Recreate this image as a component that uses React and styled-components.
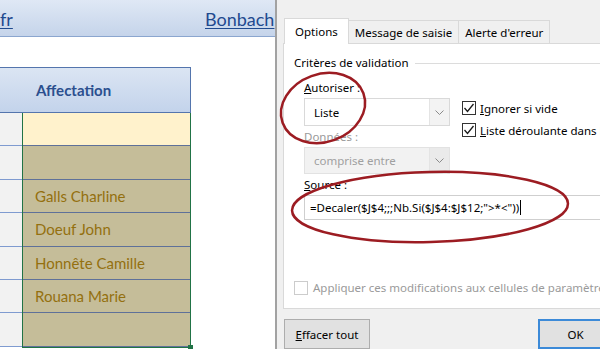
import styled, { createGlobalStyle } from "styled-components";

const GlobalStyle = createGlobalStyle`
  html, body {
    margin: 0;
    padding: 0;
    background: #ffffff;
    overflow: hidden;
  }
`;

const rows = [
  { id: 1, name: "", tone: "cream" },
  { id: 2, name: "", tone: "tan" },
  { id: 3, name: "Galls Charline", tone: "tan" },
  { id: 4, name: "Doeuf John", tone: "tan" },
  { id: 5, name: "Honnête Camille", tone: "tan" },
  { id: 6, name: "Rouana Marie", tone: "tan" },
  { id: 7, name: "", tone: "tan" },
];

const Chevron = () => (
  <svg width="9" height="5" viewBox="0 0 9 5">
    <polyline points="0.5,0.5 4.5,4.5 8.5,0.5" fill="none" stroke="#8a8a8a" strokeWidth="1" />
  </svg>
);

const Check = () => (
  <svg width="12" height="12" viewBox="0 0 12 12">
    <polyline points="1.5,6 4.5,9.5 10.5,2" fill="none" stroke="#1a1a1a" strokeWidth="1.3" />
  </svg>
);

const App = () => {
  return (
    <Page>
      <GlobalStyle />
      <Sheet>
        <LinkBar>
          <Link>fr</Link>
          <Link>Bonbach</Link>
        </LinkBar>
        <Gap />
        <Header>Affectation</Header>
        <Body>
          <RowHeads>
            {rows.map((el) => (
              <RowHead key={el.id} />
            ))}
          </RowHeads>
          <Selection>
            {rows.map((el) => (
              <Cell key={el.id} tone={el.tone}>
                {el.name}
              </Cell>
            ))}
            <Handle />
          </Selection>
        </Body>
      </Sheet>

      <Dialog>
        <Tabs>
          <Tab active>Options</Tab>
          <Tab>Message de saisie</Tab>
          <Tab>Alerte d'erreur</Tab>
        </Tabs>
        <Panel>
          <GroupTitle>
            <span>Critères de validation</span>
            <GroupLine />
          </GroupTitle>
          <Fields>
            <LeftCol>
              <Label>
                <u>A</u>utoriser :
              </Label>
              <Select>
                <SelectText>Liste</SelectText>
                <DropBtn>
                  <Chevron />
                </DropBtn>
              </Select>
              <Label disabled>Données :</Label>
              <Select disabled>
                <SelectText>comprise entre</SelectText>
                <DropBtn disabled>
                  <Chevron />
                </DropBtn>
              </Select>
            </LeftCol>
            <RightCol>
              <CheckRow>
                <Box>
                  <Check />
                </Box>
                <span>
                  <u>I</u>gnorer si vide
                </span>
              </CheckRow>
              <CheckRow>
                <Box>
                  <Check />
                </Box>
                <span>
                  <u>L</u>iste déroulante dans la
                </span>
              </CheckRow>
            </RightCol>
          </Fields>
          <SourceLabel>
            <u>S</u>ource :
          </SourceLabel>
          <SourceInput>
            =Decaler($J$4;;;Nb.Si($J$4:$J$12;"&gt;*&lt;"))
            <Caret />
          </SourceInput>
          <ApplyRow>
            <Box disabled />
            <span>Appliquer ces modifications aux cellules de paramètres i</span>
          </ApplyRow>
        </Panel>
        <Footer>
          <Button>
            <u>E</u>ffacer tout
          </Button>
          <Button primary>OK</Button>
        </Footer>
      </Dialog>

      <Marks width="600" height="349" viewBox="0 0 600 349">
        <ellipse cx="323" cy="108" rx="43" ry="34" transform="rotate(-20 323 108)" />
        <ellipse cx="430" cy="207" rx="138" ry="35" transform="rotate(-1.5 430 207)" />
      </Marks>
    </Page>
  );
};
export default App;

// page
const Page = styled.div`
  position: relative;
  display: flex;
  width: 600px;
  height: 349px;
  overflow: hidden;
  background: #ffffff;
`;

// feuille excel
const Sheet = styled.div`
  width: 275px;
  flex: none;
  display: flex;
  flex-direction: column;
  overflow: hidden;
  font-family: Lato, "Noto Sans", sans-serif;
`;

const LinkBar = styled.div`
  height: 36px;
  display: grid;
  grid-template-columns: 205px 1fr;
  align-items: center;
  background: linear-gradient(#dfe8f5, #c5d4ea);
  border-bottom: 1px solid #8ba6cf;
`;

const Link = styled.span`
  font-size: 18px;
  color: #1f4a8f;
  text-decoration: underline;
  text-underline-offset: 2px;
  white-space: nowrap;
  padding-top: 2px;
`;

const Gap = styled.div`
  height: 30px;
`;

const Header = styled.div`
  width: 191px;
  height: 46px;
  box-sizing: border-box;
  display: flex;
  align-items: center;
  padding-left: 36px;
  background: linear-gradient(#dbe5f3, #c3d3eb);
  border: 1px solid #5475ad;
  border-left: none;
  font-size: 15px;
  font-weight: bold;
  color: #2b4f8e;
`;

const Body = styled.div`
  display: flex;
  width: 191px;
`;

const RowHeads = styled.div`
  width: 22px;
  display: flex;
  flex-direction: column;
`;

const RowHead = styled.div`
  height: 33.4px;
  box-sizing: border-box;
  background: #f2f2f2;
  border-bottom: 1px solid #7f9bd0;
`;

const Selection = styled.div`
  position: relative;
  width: 169px;
  box-sizing: border-box;
  border: 1px solid #217346;
  border-top: none;
  display: flex;
  flex-direction: column;
`;

const Cell = styled.div`
  height: 33.4px;
  box-sizing: border-box;
  display: flex;
  align-items: center;
  padding-left: 12px;
  background: ${(p) => (p.tone === "cream" ? "#fff2cc" : "#c5bd99")};
  border-bottom: 1px solid #5f7199;
  font-size: 15px;
  color: #94700f;
`;

const Handle = styled.div`
  position: absolute;
  right: -3px;
  bottom: -3px;
  width: 5px;
  height: 5px;
  background: #217346;
`;

// boite de dialogue
const Dialog = styled.div`
  flex: 1;
  min-width: 0;
  display: flex;
  flex-direction: column;
  padding: 18px 0 0 6px;
  background: #f0f0f0;
  border-left: 2px solid #a2a2a2;
  font-family: "Noto Sans", sans-serif;
  font-size: 11.5px;
  color: #000000;
`;

const Tabs = styled.div`
  display: flex;
  align-items: flex-end;
  margin-left: 1px;
  margin-bottom: -1px;
  position: relative;
  z-index: 1;
`;

const Tab = styled.div`
  box-sizing: border-box;
  height: ${(p) => (p.active ? "26px" : "24px")};
  display: flex;
  align-items: center;
  padding: 0 ${(p) => (p.active ? "10px" : "6px")};
  background: ${(p) => (p.active ? "#ffffff" : "#f0f0f0")};
  border: 1px solid #d9d9d9;
  border-bottom: ${(p) => (p.active ? "none" : "1px solid #d9d9d9")};
  border-left: ${(p) => (p.active ? "1px solid #d9d9d9" : "none")};
  white-space: nowrap;
`;

const Panel = styled.div`
  height: 269px;
  box-sizing: border-box;
  display: flex;
  flex-direction: column;
  padding: 11px 0 13px 10px;
  background: #ffffff;
  border: 1px solid #d9d9d9;
  border-right: none;
  overflow: hidden;
`;

const GroupTitle = styled.div`
  display: flex;
  align-items: center;
  gap: 6px;
  line-height: 16px;
  white-space: nowrap;
`;

const GroupLine = styled.div`
  flex: 1;
  height: 1px;
  background: #dcdcdc;
`;

const Fields = styled.div`
  display: flex;
  gap: 12px;
  margin-top: 10px;
  padding-left: 10px;
`;

const LeftCol = styled.div`
  width: 146px;
  flex: none;
  display: flex;
  flex-direction: column;
`;

const RightCol = styled.div`
  display: flex;
  flex-direction: column;
  gap: 8px;
  padding-top: 20px;
  white-space: nowrap;
`;

const Label = styled.div`
  line-height: 14px;
  margin: 4px 0 3px;
  color: ${(p) => (p.disabled ? "#9a9a9a" : "#000000")};
  white-space: nowrap;

  &:first-child {
    margin-top: 0;
  }
`;

const SourceLabel = styled(Label)`
  margin-left: 10px;
`;

const Select = styled.div`
  height: ${(p) => (p.disabled ? "27px" : "28px")};
  box-sizing: border-box;
  display: flex;
  background: ${(p) => (p.disabled ? "#f2f2f2" : "#ffffff")};
  border: 1px solid ${(p) => (p.disabled ? "#e2e2e2" : "#d9d9d9")};
  color: ${(p) => (p.disabled ? "#a0a0a0" : "#000000")};
`;

const SelectText = styled.div`
  flex: 1;
  display: flex;
  align-items: center;
  padding-left: 9px;
  white-space: nowrap;
`;

const DropBtn = styled.div`
  width: 19px;
  display: flex;
  align-items: center;
  justify-content: center;
  background: ${(p) => (p.disabled ? "#eaeaea" : "#f3f3f3")};
  border-left: 1px solid #e4e4e4;
`;

const CheckRow = styled.div`
  display: flex;
  align-items: center;
  gap: 4px;
  height: 14px;
`;

const Box = styled.div`
  width: 14px;
  height: 14px;
  box-sizing: border-box;
  flex: none;
  display: flex;
  align-items: center;
  justify-content: center;
  background: #ffffff;
  border: 1px solid ${(p) => (p.disabled ? "#cccccc" : "#333333")};
`;

const SourceInput = styled.div`
  position: relative;
  height: 25px;
  width: 320px;
  box-sizing: border-box;
  flex: none;
  display: flex;
  align-items: center;
  margin-left: 10px;
  padding-left: 5px;
  border: 1px solid #cfcfcf;
  white-space: nowrap;
`;

const Caret = styled.span`
  display: inline-block;
  width: 1px;
  height: 15px;
  margin-left: 1px;
  background: #000000;
`;

const ApplyRow = styled.div`
  display: flex;
  align-items: center;
  gap: 5px;
  margin-top: auto;
  color: #9a9a9a;
  white-space: nowrap;
`;

const Footer = styled.div`
  display: flex;
  gap: 168px;
  margin-top: 10px;
  padding-left: 1px;
`;

const Button = styled.div`
  height: 30px;
  width: ${(p) => (p.primary ? "75px" : "86px")};
  flex: none;
  box-sizing: border-box;
  display: flex;
  align-items: center;
  justify-content: center;
  background: #e1e1e1;
  border: ${(p) => (p.primary ? "2px solid #3c8ad8" : "1px solid #adadad")};
  white-space: nowrap;
`;

// cercles rouges
const Marks = styled.svg`
  position: absolute;
  left: 0;
  top: 0;
  pointer-events: none;

  ellipse {
    fill: none;
    stroke: #9c1c22;
    stroke-width: 2.5;
  }
`;
